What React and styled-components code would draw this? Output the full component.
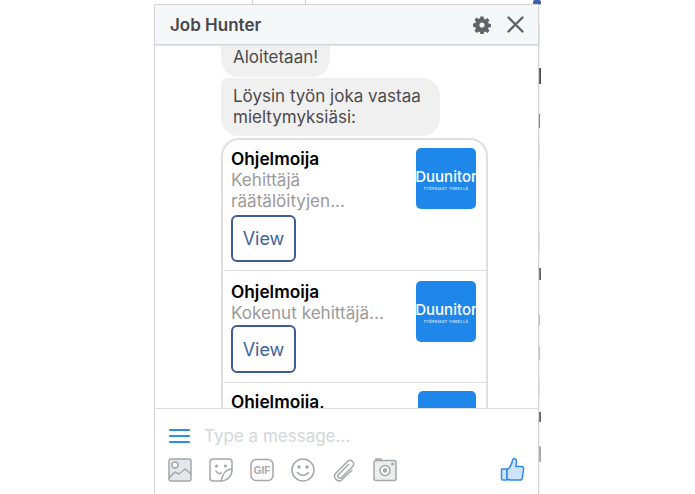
import React from "react";
import styled, { createGlobalStyle } from "styled-components";

const Global = createGlobalStyle`
  html, body { margin: 0; padding: 0; background: #fff; }
  body { font-family: Inter, "Liberation Sans", sans-serif; width: 695px; height: 494px; overflow: hidden; }
  * { box-sizing: border-box; }
`;

const Page = styled.div`
  position: relative;
  width: 695px;
  height: 494px;
  overflow: hidden;
  padding: 5px 0 0 155px;
`;

const Scrap = styled.div`
  position: absolute;
  left: ${p => p.$x}px;
  top: ${p => p.$y}px;
  width: ${p => p.$w}px;
  height: ${p => p.$h}px;
  background: ${p => p.$c};
  border-radius: ${p => p.$r || 0}px;
`;

const ChatWindow = styled.div`
  position: relative;
  width: 383px;
  height: 489px;
  background: #fff;
  display: flex;
  flex-direction: column;
  box-shadow: 0 0 0 1px #d4d4d6, 1px 0 2px #d8d8da;
`;

const Header = styled.header`
  height: 40px;
  flex: none;
  display: flex;
  align-items: center;
  padding: 0 14px 0 15px;
  background: #f6f7f9;
  border-bottom: 1px solid #d3d5d9;
  box-shadow: 0 1px 1px #e4e5e8;
  position: relative;
  z-index: 2;
`;

const Title = styled.h1`
  margin: 0;
  flex: 1;
  font-size: 17px;
  font-weight: 600;
  color: #45484e;
`;

const HeaderIcons = styled.div`
  display: flex;
  align-items: center;
  gap: 16px;
`;

const Messages = styled.main`
  flex: 1;
  min-height: 0;
  overflow: hidden;
  padding: 0 0 0 66px;
  display: flex;
  flex-direction: column;
  align-items: flex-start;
`;

const Bubble = styled.div`
  flex: none;
  background: #f1f0f0;
  color: #4b4b4b;
  font-size: 17px;
  line-height: 21px;
  padding: ${p => p.$pad};
  margin-bottom: ${p => p.$gap}px;
  border-radius: ${p => p.$radius};
`;

const Card = styled.section`
  flex: none;
  width: 267px;
  border: 2px solid #dddfe2;
  border-bottom: none;
  border-radius: 18px 18px 0 0;
  background: #fff;
`;

const Row = styled.article`
  display: flex;
  justify-content: space-between;
  align-items: flex-start;
  padding: ${p => p.$pad};
  height: ${p => p.$h}px;
  border-top: ${p => (p.$first ? "none" : "1px solid #dddfe2")};
`;

const RowText = styled.div`
  width: 175px;
  display: flex;
  flex-direction: column;
  align-items: flex-start;
`;

const Name = styled.div`
  font-size: 17.3px;
  line-height: 21px;
  font-weight: 600;
  color: #000;
`;

const Sub = styled.div`
  font-size: 17.1px;
  line-height: 21px;
  color: #9a9a9a;
`;

const ViewButton = styled.button`
  margin-top: ${p => p.$top}px;
  width: 65px;
  height: ${p => p.$h}px;
  border: 2px solid #3f5c96;
  border-radius: 6px;
  background: #fff;
  color: #42609c;
  font: 400 18px Inter, "Liberation Sans", sans-serif;
  padding: 0;
`;

const Thumb = styled.div`
  width: ${p => p.$w || 60}px;
  height: ${p => p.$h || 61}px;
  flex: none;
  border-radius: 5px;
  background: #1f87ea;
  color: #fff;
  overflow: hidden;
  display: flex;
  flex-direction: column;
  align-items: center;
  justify-content: center;
`;

const Logo = styled.div`
  font-size: 15px;
  line-height: 20px;
  font-weight: 500;
  white-space: nowrap;
  margin-top: 1px;
`;

const Tagline = styled.div`
  font-size: 3.4px;
  line-height: 5px;
  font-weight: 600;
  letter-spacing: 0.55px;
  white-space: nowrap;
  opacity: 0.85;
`;

const Footer = styled.footer`
  flex: none;
  height: 86px;
  background: #fff;
  border-top: 1px solid #dddfe2;
  padding: 15px 13px 0 13px;
  display: flex;
  flex-direction: column;
  position: relative;
`;

const InputRow = styled.div`
  display: flex;
  align-items: center;
  height: 24px;
  gap: 14px;
  padding-left: 1px;
`;

const Placeholder = styled.div`
  font-size: 17px;
  color: #d3d6da;
`;

const Tools = styled.div`
  margin-top: 9px;
  display: flex;
  align-items: center;
  justify-content: space-between;
`;

const ToolGroup = styled.div`
  display: flex;
  gap: 17px;
`;

const Gear = () => (
  <svg width="18" height="18" viewBox="-0.5 0 21 20" fill="#5f636a">
    <path fillRule="evenodd" d="M8.2 0h3.600l.5 2.800 1.500.7 2.400-1.600 2.500 2.500-1.600 2.400.7 1.500 2.800.5v3.600l-2.800.5-.7 1.500 1.600 2.400-2.500 2.500-2.400-1.600-1.500.7-.5 2.800H8.200l-.5-2.800-1.500-.7-2.400 1.600-2.500-2.500 1.600-2.400-.7-1.500L-.6 11.800V8.200l2.800-.5.7-1.500-1.600-2.400 2.500-2.500 2.400 1.600 1.500-.7z M10 7a3 3 0 1 0 0 6 3 3 0 0 0 0-6z" />
  </svg>
);

const Close = () => (
  <svg width="17" height="17" viewBox="0 0 17 17" stroke="#5f636a" strokeWidth="2.400" strokeLinecap="round">
    <path d="M1.500 1.500l14 14M15.500 1.500l-14 14" />
  </svg>
);

const Burger = () => (
  <svg width="21" height="16" viewBox="0 0 21 16" stroke="#2e8ceb" strokeWidth="2.200" strokeLinecap="round">
    <path d="M1 2h19M1 8h19M1 14h19" />
  </svg>
);

const Tool = ({ children }) => (
  <svg width="24" height="24" viewBox="0 0 24 24" fill="none" stroke="#a4a7ab" strokeWidth="1.500" strokeLinejoin="round" strokeLinecap="round">
    {children}
  </svg>
);

const ToolLabel = styled.text`
  font-family: "Liberation Sans", sans-serif;
  font-size: 10px;
  font-weight: 700;
  fill: #a4a7ab;
  stroke: none;
`;

const Like = () => (
  <svg width="25" height="25" viewBox="0 0 25 25" fill="#cfe4fb" stroke="#2e8ceb" strokeWidth="1.500" strokeLinejoin="round">
    <path d="M1.500 12h5.500v11H3a1.500 1.500 0 0 1-1.500-1.500z" />
    <path d="M7 12.500c2.500-1.500 4.500-4.500 5.200-8 .3-1.800 1-3 2.200-3 1.600 0 2.300 1.800 2.100 3.800l-.7 4.200h5.700c1.500 0 2.300 1 2.100 2.300l-1.300 9c-.2 1.300-1.100 2.200-2.500 2.200H11c-1.600 0-2.800-.5-4-1z" />
  </svg>
);

const Listing = ({ first, pad, h, name, sub, btnTop, btnH }) => (
  <Row $first={first} $pad={pad} $h={h}>
    <RowText>
      <Name>{name}</Name>
      {sub.map(s => <Sub key={s}>{s}</Sub>)}
      <ViewButton $top={btnTop} $h={btnH}>View</ViewButton>
    </RowText>
    <Thumb>
      <Logo>Duunitor</Logo>
      <Tagline>TYÖPAIKAT YHDELLÄ</Tagline>
    </Thumb>
  </Row>
);

export default function App() {
  return (
    <Page>
      <Global />
      <Scrap $x={252} $y={0} $w={1} $h={5} $c="#cfd1d5" />
      <Scrap $x={305} $y={0} $w={1} $h={5} $c="#cfd1d5" />
      <Scrap $x={533} $y={0} $w={8} $h={5} $c="#3b5dae" $r={2} />
      <Scrap $x={538} $y={24} $w={2} $h={20} $c="#e3e3e5" />
      <Scrap $x={538} $y={68} $w={3} $h={16} $c="#4a3a3a" />
      <Scrap $x={538} $y={114} $w={2} $h={14} $c="#4d5a78" />
      <Scrap $x={538} $y={143} $w={2} $h={18} $c="#e3e3e5" />
      <Scrap $x={538} $y={232} $w={2} $h={20} $c="#e3e3e5" />
      <Scrap $x={538} $y={268} $w={3} $h={12} $c="#55585e" />
      <Scrap $x={538} $y={315} $w={2} $h={10} $c="#a8a8aa" />
      <Scrap $x={538} $y={346} $w={2} $h={14} $c="#b5b5b8" />
      <Scrap $x={538} $y={378} $w={2} $h={18} $c="#e3e3e5" />
      <Scrap $x={538} $y={412} $w={3} $h={10} $c="#55585e" />
      <Scrap $x={538} $y={446} $w={3} $h={16} $c="#a0a0a3" $r={2} />
      <ChatWindow>
        <Header>
          <Title>Job Hunter</Title>
          <HeaderIcons>
            <Gear />
            <Close />
          </HeaderIcons>
        </Header>
        <Messages>
          <Bubble $gap={1} $pad="2px 12px 9px" $radius="0 0 18px 18px">Aloitetaan!</Bubble>
          <Bubble $gap={2} $pad="8px 19px 8px 12px" $radius="6px 18px 18px 18px">Löysin työn joka vastaa<br />mieltymyksiäsi:</Bubble>
          <Card>
            <Listing first pad="8px 10px 8px 8px" h={130} name="Ohjelmoija" sub={["Kehittäjä", "räätälöityjen..."]} btnTop={4} btnH={47} />
            <Listing pad="10px 10px 8px 8px" h={112} name="Ohjelmoija" sub={["Kokenut kehittäjä..."]} btnTop={2} btnH={48} />
            <Row $pad="8px 10px 0 8px" $h={40}>
              <RowText><Name>Ohjelmoija,</Name></RowText>
              <Thumb $w={58} />
            </Row>
          </Card>
        </Messages>
        <Footer>
          <InputRow>
            <Burger />
            <Placeholder>Type a message...</Placeholder>
          </InputRow>
          <Tools>
            <ToolGroup>
              <Tool>
                <rect x="1" y="1" width="22" height="22" rx="2" fill="#e6e7e9" />
                <circle cx="7" cy="7" r="3" fill="#fff" />
                <path d="M1 20l6-6 4 2 6-5 6 5" />
              </Tool>
              <Tool>
                <path d="M4 1h16a3 3 0 0 1 3 3v8c0 6-5 11-11 11H4a3 3 0 0 1-3-3V4a3 3 0 0 1 3-3z" />
                <path d="M23 11c-5 0-9 3-11 12M7 13c1 2 3 3 5 2" />
                <circle cx="7.500" cy="8" r=".8" fill="#a4a7ab" />
                <circle cx="16.500" cy="8" r=".8" fill="#a4a7ab" />
              </Tool>
              <Tool>
                <rect x="1" y="1.500" width="22" height="21" rx="5" />
                <ToolLabel x="12" y="16" textAnchor="middle">GIF</ToolLabel>
              </Tool>
              <Tool>
                <circle cx="12" cy="12" r="11" />
                <circle cx="8" cy="9" r="1" fill="#a4a7ab" />
                <circle cx="16" cy="9" r="1" fill="#a4a7ab" />
                <path d="M6.500 14.500c2.500 3.500 8.500 3.500 11 0" />
              </Tool>
              <Tool>
                <path d="M16.500 6.500L6.500 16.500a2 2 0 0 0 3 3L21 8a3.600 3.600 0 0 0-5-5L3.500 15.500a4.500 4.500 0 0 0 6.300 6.300L20 12" />
              </Tool>
              <Tool>
                <rect x="1" y="2.500" width="22" height="20" rx="2" fill="#eceded" />
                <path d="M3 2.500V1h5v1.500" />
                <circle cx="12" cy="12.500" r="5" fill="#fff" />
                <circle cx="12" cy="12.500" r="1.500" fill="#a4a7ab" />
                <circle cx="19.500" cy="6" r=".8" fill="#a4a7ab" />
              </Tool>
            </ToolGroup>
            <Like />
          </Tools>
        </Footer>
      </ChatWindow>
    </Page>
  );
}
